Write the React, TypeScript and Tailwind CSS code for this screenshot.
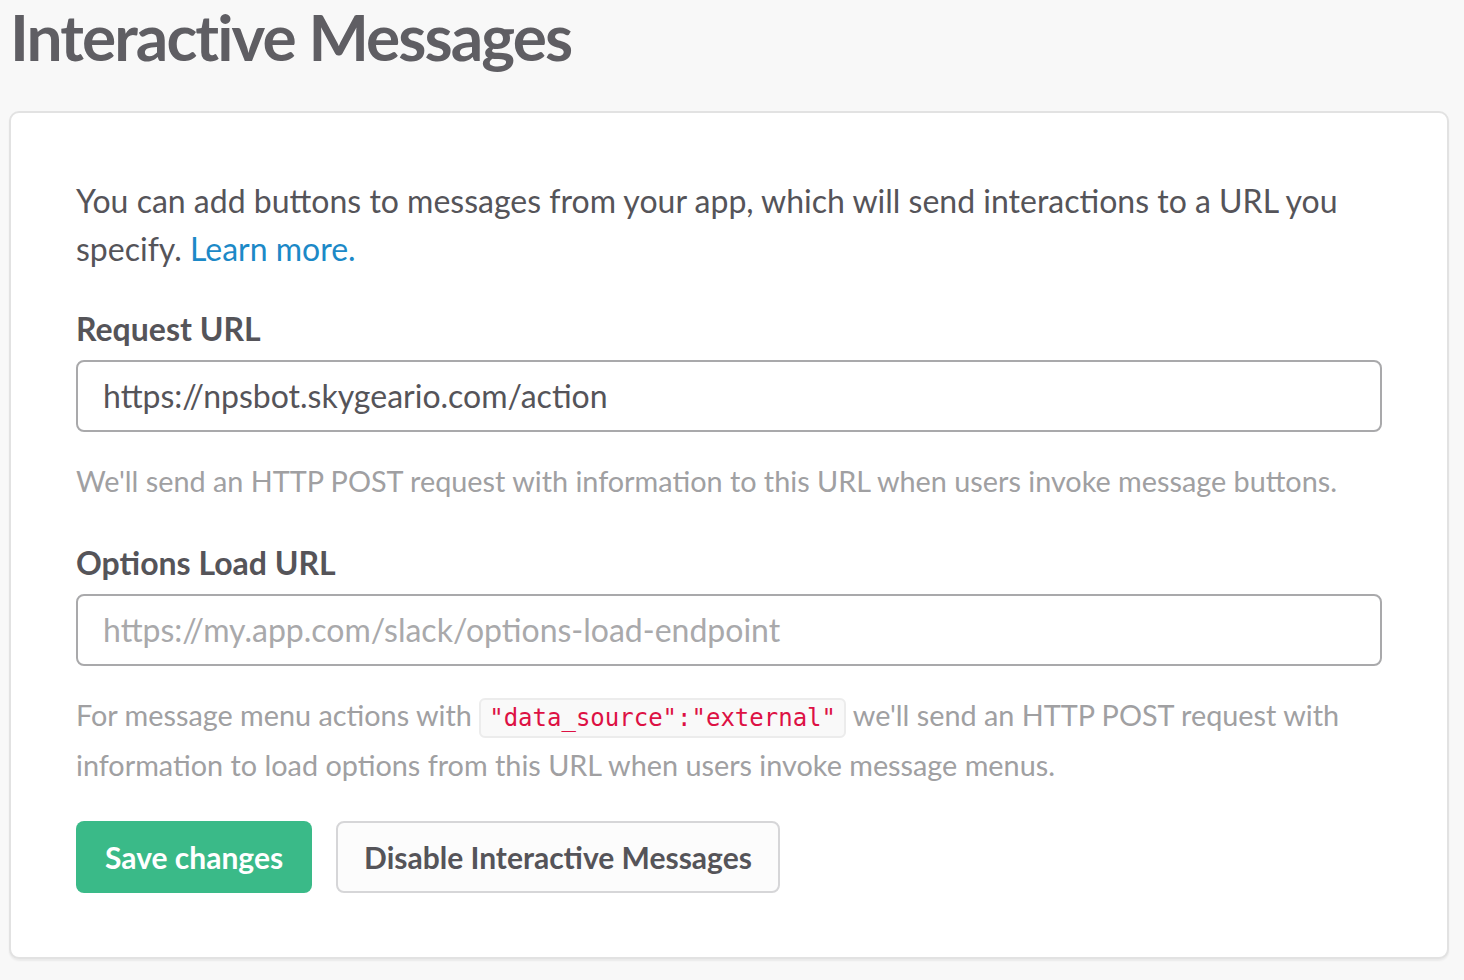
export default function App() {
  const lato = { fontFamily: "Lato, 'Noto Sans', sans-serif" };
  return (
    <div className="min-h-[980px] bg-[#f8f8f8] pl-[9px] pr-[15px] pt-[1px]" style={lato}>
      <h1 className="m-0 pl-[1px] text-[64px] font-bold leading-[72px] tracking-[-1.9px] text-[#5f5e63]">
        Interactive Messages
      </h1>
      <div className="mt-[38px] rounded-[10px] border-2 border-[#e2e2e2] bg-white px-[65px] pt-[64px] pb-[64px] shadow-[0_2px_2px_rgba(0,0,0,0.06)]">
        <p className="text-[32px] leading-[48px] text-[#555459]">
          You can add buttons to messages from your app, which will send interactions to a URL you
          specify. <a className="text-[#1c89c7]">Learn more.</a>
        </p>

        <label className="mt-[32px] block text-[32px] font-bold leading-[48px] text-[#555459]">
          Request URL
        </label>
        <div className="mt-[7px] flex h-[72px] items-center rounded-[8px] border-2 border-[#a9a9ab] bg-white px-[25px] text-[32px] text-[#555459]">
          https://npsbot.skygeario.com/action
        </div>
        <p className="mt-[24px] text-[28.8px] leading-[50px] text-[#a0a0a2]">
          We'll send an HTTP POST request with information to this URL when users invoke message buttons.
        </p>

        <label className="mt-[33px] block text-[32px] font-bold leading-[48px] text-[#555459]">
          Options Load URL
        </label>
        <div className="mt-[7px] flex h-[72px] items-center rounded-[8px] border-2 border-[#a9a9ab] bg-white px-[25px] text-[32px] text-[#a9a9ab]">
          https://my.app.com/slack/options-load-endpoint
        </div>
        <p className="mt-[24px] text-[28.8px] leading-[50px] text-[#a0a0a2]">
          For message menu actions with{" "}
          <code
            className="rounded-[6px] border-2 border-[#ececec] bg-[#f9f9f9] px-[8px] py-[4px] text-[24px] leading-none text-[#dd1144]"
            style={{ fontFamily: "'DejaVu Sans Mono', 'Liberation Mono', monospace" }}
          >
            "data_source":"external"
          </code>{" "}
          we'll send an HTTP POST request with information to load options from this URL when users invoke message menus.
        </p>

        <div className="mt-[31px] flex gap-[24px]">
          <button className="h-[72px] rounded-[8px] bg-[#3aba88] px-[29px] text-[30px] font-bold text-white">
            Save changes
          </button>
          <button className="h-[72px] rounded-[8px] border-2 border-[#d6d6d8] bg-[#fcfcfc] px-[26px] text-[30px] font-bold text-[#555459]">
            Disable Interactive Messages
          </button>
        </div>
      </div>
    </div>
  );
}
